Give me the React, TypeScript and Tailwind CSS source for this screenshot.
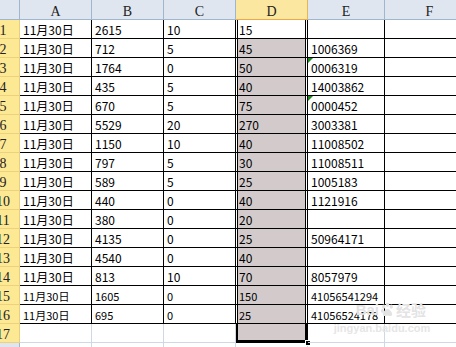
const rows: string[][] = [
  ["11月30日", "2615", "10", "15", ""],
  ["11月30日", "712", "5", "45", "1006369"],
  ["11月30日", "1764", "0", "50", "0006319"],
  ["11月30日", "435", "5", "40", "14003862"],
  ["11月30日", "670", "5", "75", "0000452"],
  ["11月30日", "5529", "20", "270", "3003381"],
  ["11月30日", "1150", "10", "40", "11008502"],
  ["11月30日", "797", "5", "30", "11008511"],
  ["11月30日", "589", "5", "25", "1005183"],
  ["11月30日", "440", "0", "40", "1121916"],
  ["11月30日", "380", "0", "20", ""],
  ["11月30日", "4135", "0", "25", "50964171"],
  ["11月30日", "4540", "0", "40", ""],
  ["11月30日", "813", "10", "70", "8057979"],
  ["11月30日", "1605", "0", "150", "41056541294"],
  ["11月30日", "695", "0", "25", "41056524178"],
  ["", "", "", "", ""],
];

const headers = ["A", "B", "C", "D", "E", "F"];
const widths = ["w-[72px]", "w-[72px]", "w-[72px]", "w-[72px]", "w-[77px]", "w-[90px]"];

// rows whose E value is a number stored as text
const textNums = [2, 4];

function GreenTick() {
  return (
    <svg className="absolute left-0 top-0" width="5" height="5" viewBox="0 0 5 5">
      <polygon points="0,0 5,0 0,5" fill="#1e8a1e" />
    </svg>
  );
}

function Paw() {
  return (
    <svg width="15" height="15" viewBox="0 0 16 16" fill="#e3e3e3">
      <ellipse cx="4" cy="5" rx="1.8" ry="2.3" />
      <ellipse cx="8" cy="3" rx="1.8" ry="2.3" />
      <ellipse cx="12" cy="5" rx="1.8" ry="2.3" />
      <ellipse cx="2.5" cy="9.5" rx="1.6" ry="2" />
      <path d="M8 7.5c2.5 0 5 3.5 5 5.5 0 1.8-1.5 2.2-2.6 2-.9-.2-1.6-.6-2.4-.6s-1.5.4-2.4.6C4.5 15.2 3 14.8 3 13c0-2 2.5-5.5 5-5.5z" />
    </svg>
  );
}

export default function App() {
  return (
    <div className="relative w-[456px] h-[347px] overflow-hidden bg-white text-black">
      <div className="ml-[-13px] flex flex-col">
        {/* column headers */}
        <div className="flex h-[20px] font-['Liberation_Serif',serif] text-[14px] leading-none text-[#222]">
          <div className="w-[33px] shrink-0 border-r border-b border-[#9eb6ce] bg-[#dfe6f0]" />
          {headers.map((h, i) => (
            <div
              key={h}
              className={`${widths[i]} shrink-0 flex justify-center pt-[5px] border-r border-b ${
                h === "D"
                  ? "bg-[#fbe79f] border-r-[#e2b75a] border-b-[#eea944]"
                  : "bg-[#dfe6f0] border-[#9eb6ce]"
              }`}
            >
              {h}
            </div>
          ))}
        </div>

        {rows.map((r, ri) => {
          const last = ri === rows.length - 1;
          const small = ri === 14 || ri === 15;
          const grid = last ? "border-[#d0d7e5]" : "border-black";
          const txt = small ? "text-[11px]" : "text-[12px]";
          return (
            <div key={ri} className="flex h-[19px] font-['Noto_Sans_CJK_SC',sans-serif] leading-none">
              <div className="w-[33px] shrink-0 flex justify-center items-end border-r border-b border-r-[#e8cf80] border-b-[#ecd27e] bg-[#fde994] font-['Liberation_Serif',serif] text-[14px] text-[#222]">
                {ri + 1}
              </div>
              {r.map((v, ci) => {
                if (ci === 3) {
                  const sel = last
                    ? "bg-[#d3cbcb] border-r border-b border-black shadow-[inset_2px_0_0_#000,inset_-2px_0_0_#000,inset_0_-2px_0_#000]"
                    : `${ri === 0 ? "bg-white" : "bg-[#d3cbcb]"} border-r border-b border-black shadow-[inset_1px_0_0_#fff,inset_2px_0_0_#000,inset_-1px_0_0_#fff,inset_-2px_0_0_#000]`;
                  return (
                    <div
                      key={ci}
                      className={`relative w-[72px] shrink-0 flex items-end pl-[3px] pb-[2px] ${txt} ${sel}`}
                    >
                      {v}
                      {last && (
                        <div className="absolute right-[-4px] bottom-[-4px] w-[6px] h-[6px] bg-black border border-white" />
                      )}
                    </div>
                  );
                }
                return (
                  <div
                    key={ci}
                    className={`relative ${widths[ci]} shrink-0 flex items-end pl-[3px] pb-[2px] whitespace-nowrap border-r border-b ${grid} ${txt}`}
                  >
                    {ci === 4 && textNums.includes(ri) && <GreenTick />}
                    {v}
                  </div>
                );
              })}
              <div className={`w-[90px] shrink-0 border-r border-b ${grid}`} />
            </div>
          );
        })}

        {/* row 18, mostly cut off */}
        <div className="flex h-[19px]">
          <div className="w-[33px] shrink-0 border-r border-[#9eb6ce] bg-[#dfe6f0]" />
          {widths.map((w, i) => (
            <div key={i} className={`${w} shrink-0 border-r border-[#d0d7e5]`} />
          ))}
        </div>
      </div>

      {/* watermark */}
      <div className="pointer-events-none absolute left-[338px] top-[302px] w-[88px] flex flex-col items-end">
        <div className="flex items-center gap-[1px] font-['Liberation_Sans',sans-serif] font-bold text-[15px] leading-none text-[#e3e3e3]">
          <span>Bai</span>
          <Paw />
          <span className="font-['Noto_Sans_CJK_SC',sans-serif] text-[15px]">经验</span>
        </div>
        <div className="mt-[6px] self-center font-['Liberation_Sans',sans-serif] font-bold text-[11px] leading-none text-[#e6e6e6]">
          jingyan.baidu.com
        </div>
      </div>
    </div>
  );
}
